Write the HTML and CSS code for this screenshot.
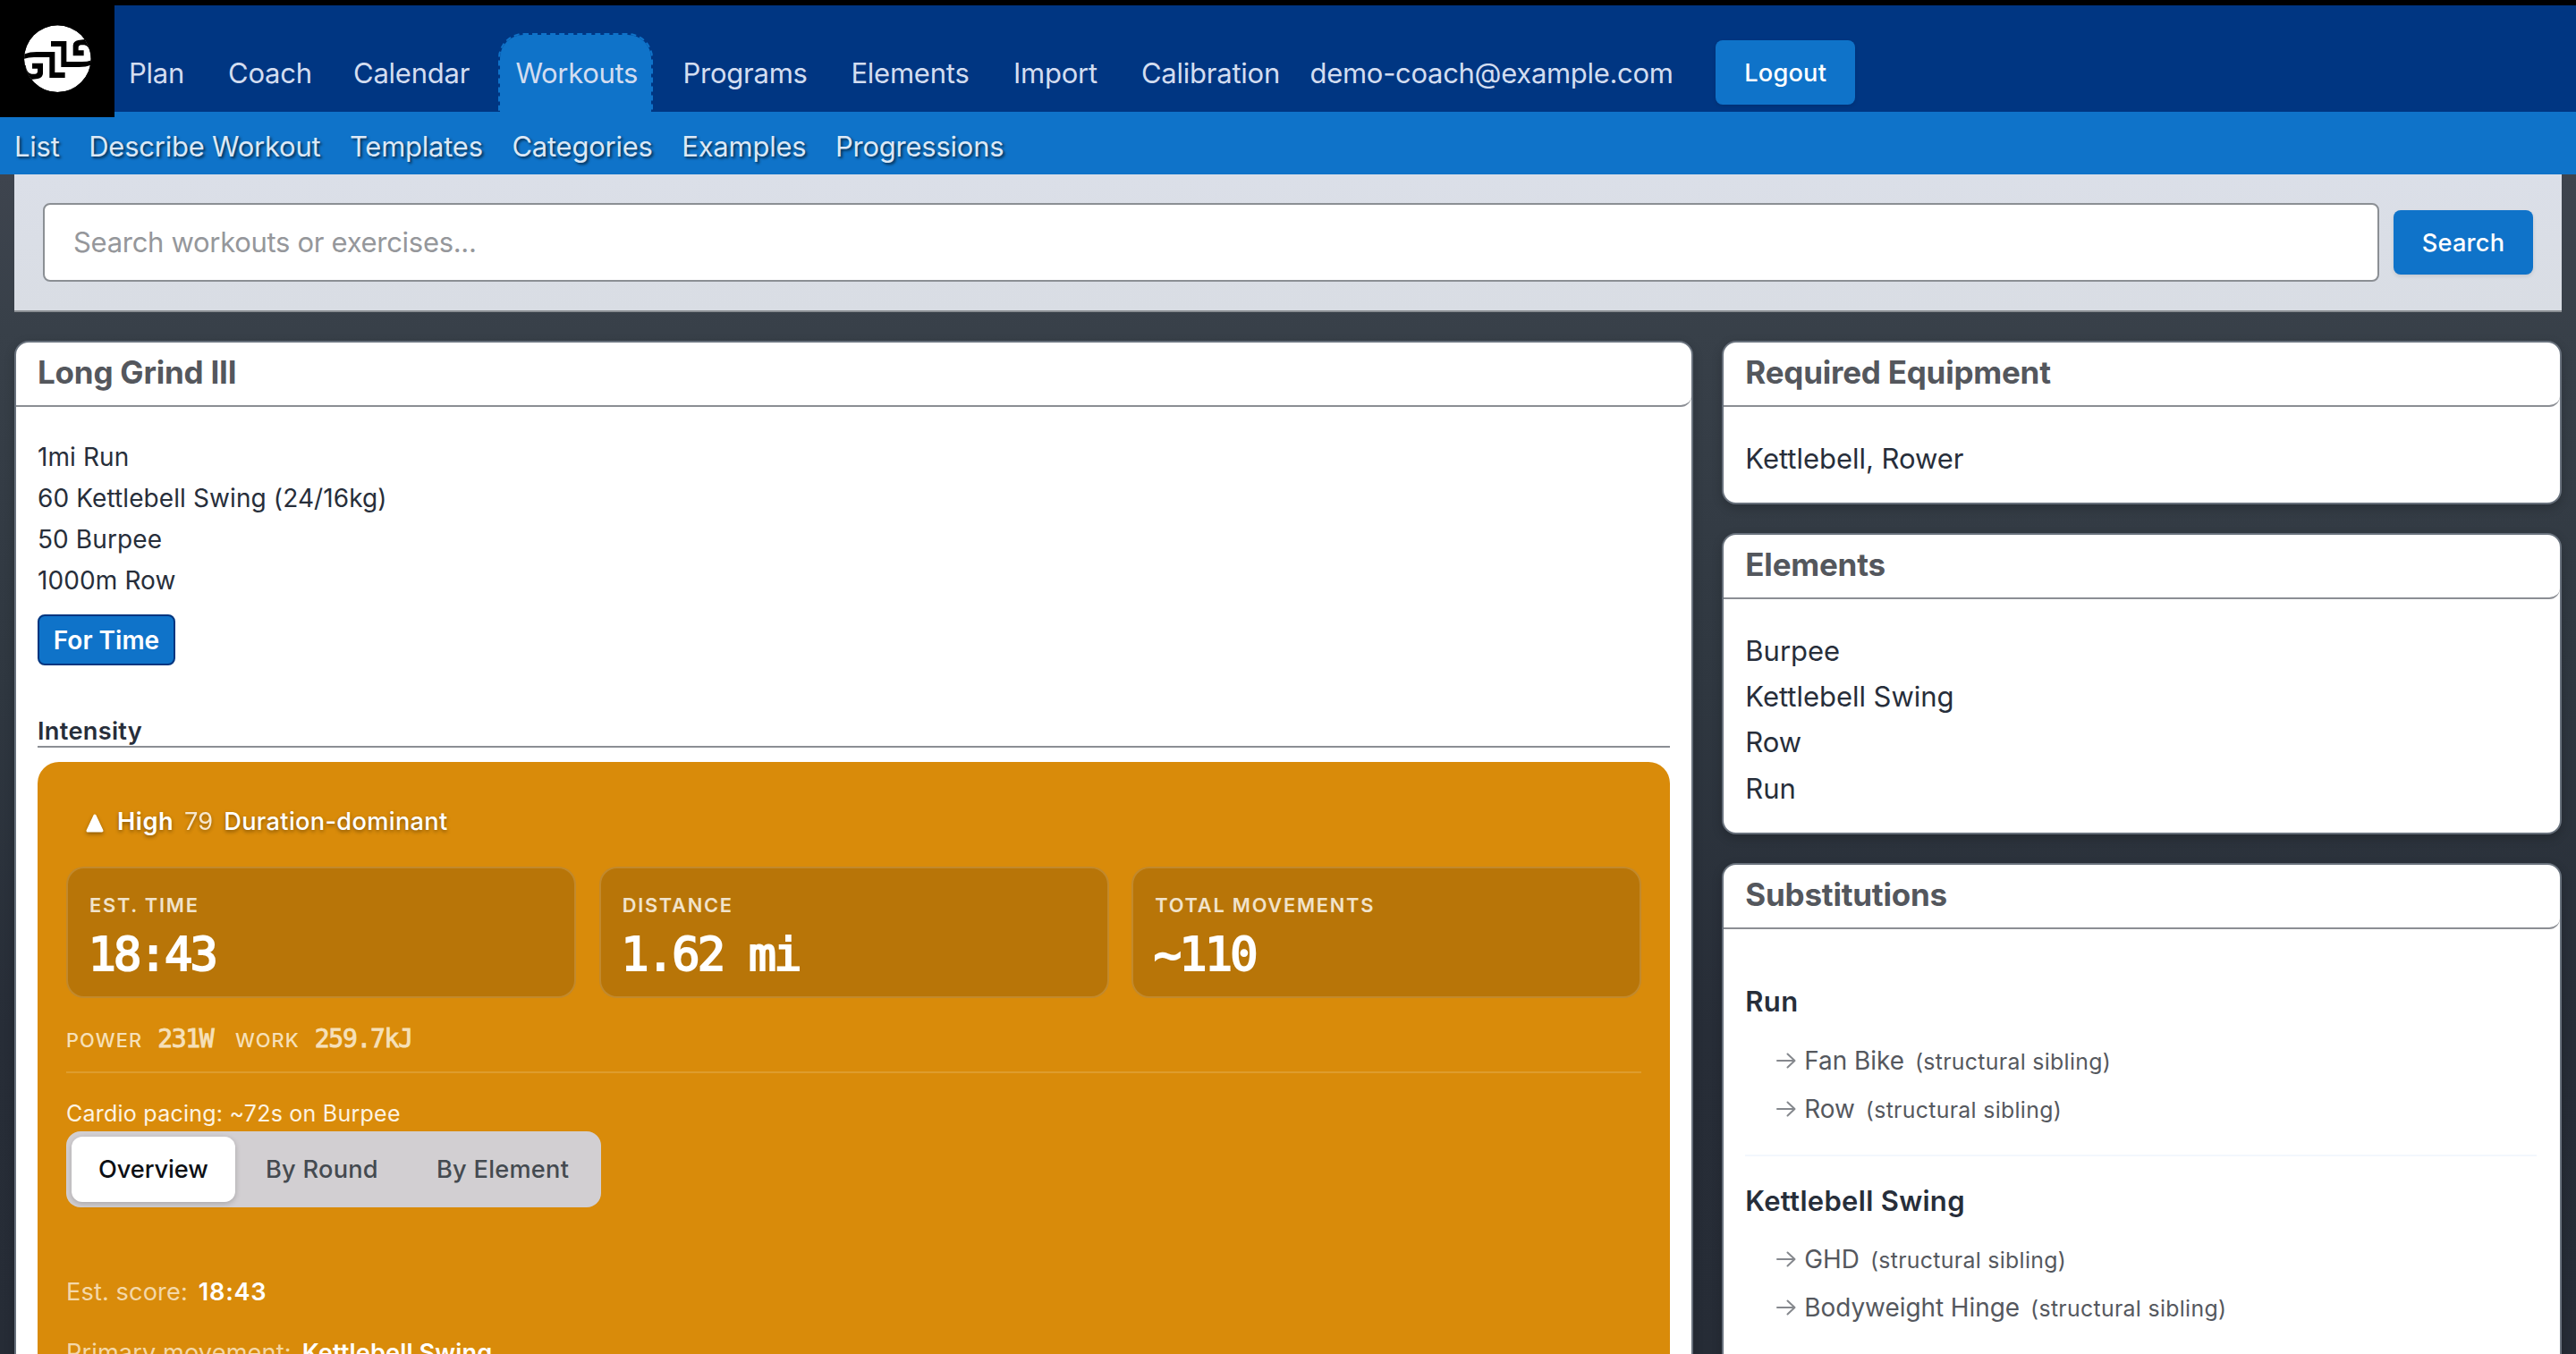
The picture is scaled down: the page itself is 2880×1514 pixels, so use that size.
FILE: index.html
```html
<!DOCTYPE html>
<html lang="en">
<head>
<meta charset="utf-8">
<title>Long Grind III</title>
<link rel="stylesheet" href="styles.css">
</head>
<body>
<header class="topbar">
  <a class="logo" href="#">
    <svg viewBox="0 0 384 393" width="128" height="131" aria-hidden="true">
      <defs>
        <clipPath id="disc"><circle cx="193" cy="197" r="112"/></clipPath>
        <g id="arm">
          <path d="M171 138H223V207H275Q295 207 310 201V217Q290 225 265 225H205V156H171Z"/>
          <path d="M245 187V152Q246 138 262 135L284 132L320 120V180H303Q300 154 283 151H272Q263 152 263 160V169H281V187Z"/>
        </g>
      </defs>
      <g clip-path="url(#disc)">
        <circle cx="193" cy="197" r="112" fill="#fff"/>
        <use href="#arm"/>
        <use href="#arm" transform="rotate(180 194.5 199.5)"/>
      </g>
    </svg>
  </a>
  <nav class="nav">
    <a class="nav-item">Plan</a>
    <a class="nav-item">Coach</a>
    <a class="nav-item">Calendar</a>
    <a class="nav-item active">Workouts</a>
    <a class="nav-item">Programs</a>
    <a class="nav-item">Elements</a>
    <a class="nav-item">Import</a>
    <a class="nav-item">Calibration</a>
    <span class="nav-item account">demo-coach@example.com</span>
    <button class="btn logout">Logout</button>
  </nav>
</header>
<nav class="subnav">
  <a>List</a><a>Describe Workout</a><a>Templates</a><a>Categories</a><a>Examples</a><a>Progressions</a>
</nav>
<form class="search">
  <input class="search-input" type="text" placeholder="Search workouts or exercises...">
  <button class="btn" type="button">Search</button>
</form>
<main class="columns">
  <section class="card">
    <h2 class="card-title">Long Grind III</h2>
    <div class="card-body workout">
      <p>1mi Run</p>
      <p>60 Kettlebell Swing (24/16kg)</p>
      <p>50 Burpee</p>
      <p>1000m Row</p>
      <span class="badge">For Time</span>
      <h3 class="section-title">Intensity</h3>
      <div class="intensity">
        <div class="level">
          <svg class="level-icon" viewBox="0 0 20 21" width="20" height="21" aria-hidden="true"><path d="M10 2L18 19H2Z" fill="#fff" stroke="#fff" stroke-width="3" stroke-linejoin="round"/></svg>
          <strong>High</strong><span class="score">79</span><em>Duration-dominant</em>
        </div>
        <div class="tiles">
          <div class="tile"><div class="label">EST. TIME</div><div class="value">18:43</div></div>
          <div class="tile"><div class="label">DISTANCE</div><div class="value">1.62 mi</div></div>
          <div class="tile"><div class="label">TOTAL MOVEMENTS</div><div class="value">~110</div></div>
        </div>
        <div class="metrics">
          <span class="metric-name">POWER</span><span class="metric power">231W</span>
          <span class="metric-name">WORK</span><span class="metric">259.7kJ</span>
        </div>
        <div class="pacing">Cardio pacing: ~72s on Burpee</div>
        <div class="segments">
          <span class="segment selected">Overview</span><span class="segment">By Round</span><span class="segment">By Element</span>
        </div>
        <div class="facts">
          <div class="fact"><span>Est. score:</span><b class="numeric">18:43</b></div>
          <div class="fact"><span>Primary movement:</span><b>Kettlebell Swing</b></div>
        </div>
      </div>
    </div>
  </section>
  <aside class="side">
    <section class="card">
      <h2 class="card-title">Required Equipment</h2>
      <div class="card-body list"><p>Kettlebell, Rower</p></div>
    </section>
    <section class="card">
      <h2 class="card-title">Elements</h2>
      <div class="card-body list"><p>Burpee</p><p>Kettlebell Swing</p><p>Row</p><p>Run</p></div>
    </section>
    <section class="card">
      <h2 class="card-title">Substitutions</h2>
      <div class="card-body subs">
        <div class="sub">
          <h4>Run</h4>
          <div class="option"><svg class="arrow" viewBox="0 0 22 18"><path d="M1 9H20M12.5 1.5L20.5 9L12.5 16.5"/></svg><span>Fan Bike</span><small>(structural sibling)</small></div>
          <div class="option"><svg class="arrow" viewBox="0 0 22 18"><path d="M1 9H20M12.5 1.5L20.5 9L12.5 16.5"/></svg><span>Row</span><small>(structural sibling)</small></div>
        </div>
        <div class="sub">
          <h4>Kettlebell Swing</h4>
          <div class="option"><svg class="arrow" viewBox="0 0 22 18"><path d="M1 9H20M12.5 1.5L20.5 9L12.5 16.5"/></svg><span>GHD</span><small>(structural sibling)</small></div>
          <div class="option"><svg class="arrow" viewBox="0 0 22 18"><path d="M1 9H20M12.5 1.5L20.5 9L12.5 16.5"/></svg><span>Bodyweight Hinge</span><small>(structural sibling)</small></div>
        </div>
      </div>
    </section>
  </aside>
</main>
</body>
</html>
```
FILE: styles.css
```css
* { box-sizing: border-box; }

body {
  display: flex;
  flex-direction: column;
  margin: 0;
  height: 1514px;
  overflow: hidden;
  background: linear-gradient(#40464f 0, #3e444e 195px, #384049 370px, #2f3740 770px, #272d37 1150px, #262c36 100%);
  color: #272e3a;
  font-family: Inter, "Liberation Sans", sans-serif;
  font-size: 31px;
}

h2, h3, h4, p { margin: 0; }

/* Top navigation */
.topbar {
  flex: none;
  display: flex;
  height: 125px;
  border-top: 6px solid #000;
  background: #003682;
}

.logo {
  flex: none;
  width: 128px;
  height: 131px;
  margin-top: -6px;
  background: #000;
  position: relative;
  z-index: 1;
}

.logo svg { display: block; }

.nav {
  display: grid;
  grid-template-columns: 111px 140px 178.4px 190px 188px 181.5px 143px 188.7px 469.6px auto;
  align-items: end;
  letter-spacing: -0.23px;
}

.nav-item {
  padding: 2px 0 1px 16px;
  line-height: 85px;
  color: #d3ddf0;
  white-space: nowrap;
}

.nav-item.active {
  width: 173px;
  padding: 0 0 0 17px;
  line-height: 86px;
  border: 2px dashed #0f73c9;
  border-bottom: 0;
  border-radius: 28px 28px 0 0;
  background: #0f73c9;
  background-clip: padding-box;
  letter-spacing: -0.3px;
}

.nav-item.account { letter-spacing: -0.31px; }

.btn {
  width: 156px;
  height: 72px;
  padding: 0;
  border: 0;
  border-radius: 8px;
  background: #0f73c9;
  color: #fff;
  font: 500 27.2px Inter, sans-serif;
  letter-spacing: 0.2px;
  box-shadow: 0 2px 4px rgba(0, 0, 0, 0.1);
}

.logout { margin-bottom: 8px; }

.subnav {
  flex: none;
  display: flex;
  gap: 32.6px;
  height: 70px;
  padding-left: 16px;
  background: #0f73c9;
  color: #dbe8f6;
  line-height: 77px;
  letter-spacing: -0.24px;
  text-shadow: 2px 2px 3px rgba(0, 0, 0, 0.6);
}

/* Search */
.search {
  flex: none;
  display: flex;
  align-items: center;
  gap: 16px;
  height: 154px;
  margin: 0 16px;
  padding: 0 32px;
  border-bottom: 2px solid #8b8f94;
  background: linear-gradient(#dbdfe8, #d9dde4);
}

.search-input {
  flex: 1;
  height: 88px;
  padding: 0 32px 2px;
  border: 2px solid #8b8f94;
  border-radius: 8px;
  background: #fff;
  font: 31px Inter, sans-serif;
  letter-spacing: -0.3px;
}

.search-input::placeholder { color: #95979b; }

/* Cards */
.columns {
  flex: 1;
  min-height: 0;
  overflow: hidden;
  display: grid;
  grid-template-columns: 2fr 1fr;
  gap: 32px;
  align-items: start;
  padding: 32px 16px 0;
}

.side { display: grid; gap: 32px; }

.card {
  border: 2px solid #68717c;
  border-radius: 16px;
  background: #fff;
  box-shadow: 0 4px 12px rgba(0, 0, 0, 0.2);
}

.card-title {
  height: 72px;
  padding: 0 24px;
  border-bottom: 2px solid #8b8e94;
  border-radius: 0 0 12px 0;
  color: #54575d;
  font-size: 35px;
  line-height: 67px;
  letter-spacing: -0.22px;
}

.card-body { padding: 0 24px; }

.workout { padding-top: 33px; font-size: 28px; line-height: 46px; letter-spacing: 0.1px; }

.badge {
  display: block;
  width: 154px;
  height: 57px;
  margin-top: 15px;
  border: 2px solid #00357f;
  border-radius: 8px;
  background: #0f73c9;
  color: #fff;
  font-weight: 600;
  line-height: 55px;
  letter-spacing: 0;
  text-align: center;
}

.section-title {
  margin-top: 56px;
  border-bottom: 2px solid #8b8e94;
  font-size: 27.2px;
  font-weight: 600;
  height: 36px;
  line-height: 36px;
  letter-spacing: 0.3px;
}

/* Intensity panel */
.intensity {
  height: 1000px;
  margin-top: 16px;
  padding: 45px 32px 0;
  border-radius: 24px;
  background: #d98b0a;
  color: #fff;
  font-size: 27.2px;
}

.level {
  display: flex;
  align-items: center;
  height: 44px;
  padding-left: 22px;
  line-height: 44px;
  text-shadow: 0 2px 4px rgba(0, 0, 0, 0.4);
}

.level-icon { margin: 2px 15px 0 0; filter: drop-shadow(0 2px 2px rgba(0, 0, 0, 0.35)); }
.level strong { font-weight: 600; letter-spacing: 0.5px; }
.level .score { margin-left: 12px; opacity: 0.8; }
.level em { margin-left: 12px; font-style: normal; font-weight: 500; letter-spacing: 0.32px; }

.tiles {
  display: grid;
  grid-template-columns: repeat(3, 1fr);
  gap: 25.6px;
  margin-top: 28px;
}

.tile {
  height: 146.5px;
  padding: 26px 24px 0;
  border: 2px solid rgba(255, 255, 255, 0.15);
  border-radius: 20px;
  background: #b87508;
}

.label {
  color: #f1e3cb;
  font-size: 21.8px;
  font-weight: 600;
  line-height: 30px;
  letter-spacing: 1.76px;
}

.value {
  margin: 12px 0 0 -1.5px;
  font-family: "DejaVu Sans Mono", monospace;
  font-size: 52px;
  line-height: 56px;
  letter-spacing: -2.8px;
  -webkit-text-stroke: 2px #fff;
}

.metrics {
  display: flex;
  align-items: baseline;
  height: 58px;
  margin-top: 26.5px;
  border-bottom: 2px solid rgba(255, 255, 255, 0.15);
  color: #f6e0b9;
  line-height: 40px;
}

.metric-name { font-size: 21.8px; font-weight: 500; letter-spacing: 1.1px; }

.metric {
  margin-left: 17px;
  font-family: "DejaVu Sans Mono", monospace;
  font-size: 28px;
  letter-spacing: -1.3px;
  -webkit-text-stroke: 0.9px #f6e0b9;
}

.metric.power { margin-right: 24.5px; }

.pacing {
  margin-top: 25px;
  color: #fdf3e2;
  font-size: 25px;
  line-height: 40px;
  letter-spacing: 0.24px;
}

.segments {
  display: grid;
  grid-template-columns: 183px 188px 178px;
  gap: 3px;
  align-items: center;
  width: 597.6px;
  height: 85px;
  padding: 0 6px;
  border-radius: 16px;
  background: #d2cfd2;
  color: #444a50;
  font-weight: 500;
  line-height: 73px;
  letter-spacing: 0.25px;
}

.segment { padding-left: 31px; border-radius: 12px; white-space: nowrap; }

.selected {
  padding-left: 30px;
  background: #fff;
  color: #0c0f14;
  letter-spacing: -0.09px;
  box-shadow: 0 2px 6px rgba(0, 0, 0, 0.2);
}

.facts { display: grid; gap: 24px; margin-top: 73px; line-height: 44px; }
.fact { display: flex; gap: 12px; }
.fact span { color: #f4d8a9; }
.fact b { font-weight: 600; }
.fact .numeric { letter-spacing: 0.7px; }

/* Side cards */
.list { padding-top: 32px; padding-bottom: 23.8px; line-height: 51.2px; letter-spacing: -0.03px; }

.subs { min-height: 640px; padding: 32px 24px 0; }

.sub { margin-right: 2px; padding: 23.6px 0 24.6px; border-bottom: 2px solid #f3f7fd; }

.sub h4 {
  margin-bottom: 12.3px;
  font-size: 31px;
  font-weight: 600;
  line-height: 52px;
  letter-spacing: 0.3px;
}

.option {
  display: flex;
  align-items: baseline;
  height: 54px;
  padding-left: 35px;
  color: #55585e;
  font-size: 27.9px;
  line-height: 54px;
  letter-spacing: -0.02px;
}

.arrow {
  width: 22px;
  height: 18px;
  margin-right: 9px;
  fill: none;
  stroke: #85888d;
  stroke-width: 2;
  stroke-linecap: round;
  stroke-linejoin: round;
  position: relative;
  top: -1px;
}

.option small { margin-left: 12px; font-size: 24.8px; line-height: 30px; letter-spacing: 0.33px; }
```
